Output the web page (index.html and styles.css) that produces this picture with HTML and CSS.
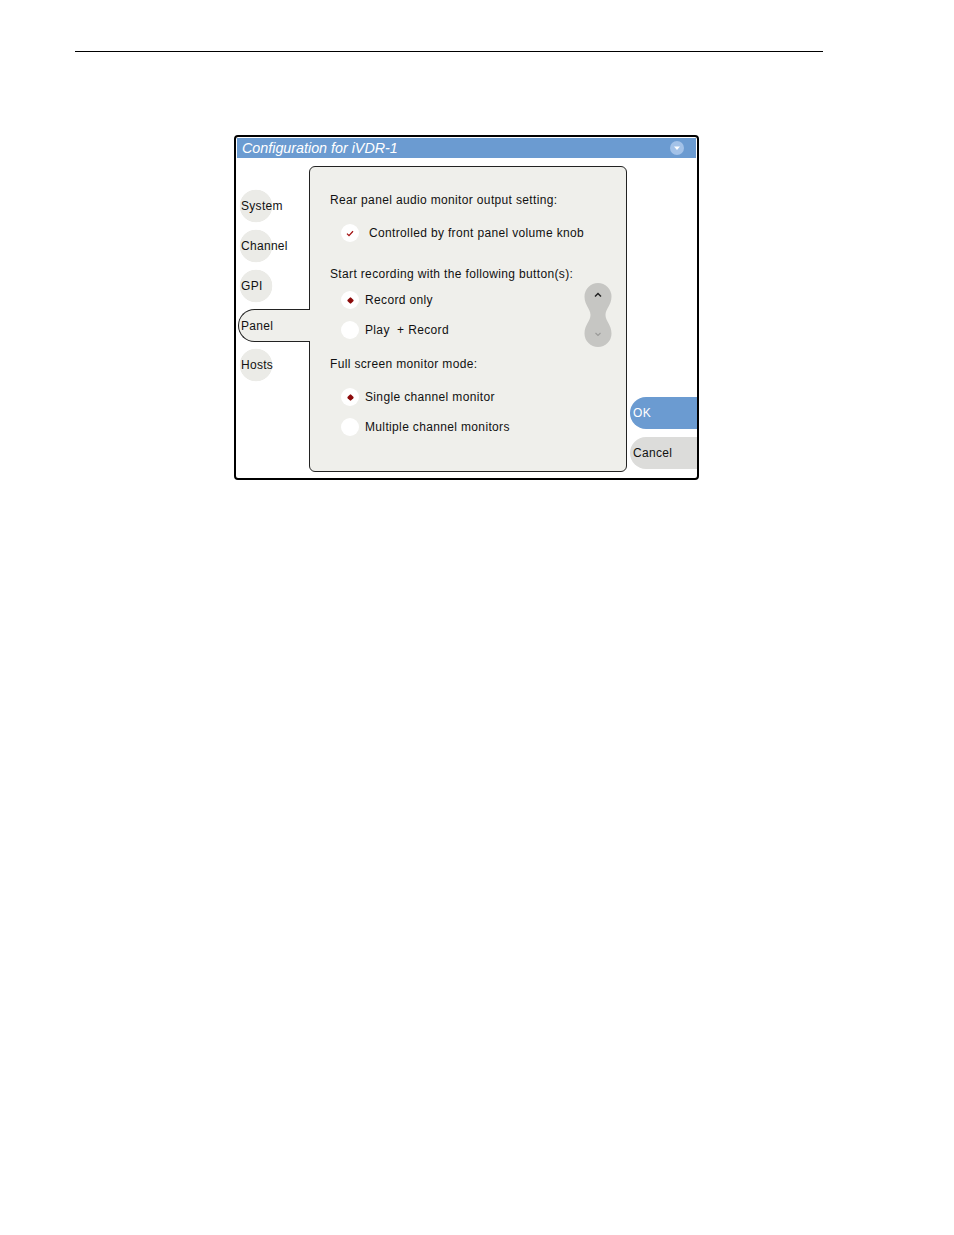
FILE: index.html
```html
<!DOCTYPE html>
<html>
<head>
<meta charset="utf-8">
<link rel="stylesheet" href="styles.css">
</head>
<body>
<div class="page">
  <div class="rule"></div>
  <div class="window">
    <div class="titlebar">
      <span class="title">Configuration for iVDR-1</span>
      <span class="menu-btn">
        <svg width="14" height="14" viewBox="0 0 14 14"><circle cx="7" cy="7" r="7" fill="#a3c2e8"/><polygon points="4,5.5 10,5.5 7,9" fill="#fff"/></svg>
      </span>
    </div>
    <div class="win-body">
      <nav class="tabs">
        <div class="tab">System</div>
        <div class="tab">Channel</div>
        <div class="tab">GPI</div>
        <div class="tab tab-active">Panel</div>
        <div class="tab">Hosts</div>
      </nav>
      <section class="panel">
        <div class="heading h1">Rear panel audio monitor output setting:</div>
        <div class="option check-row opt1">
          <span class="radio"><svg width="8" height="7" viewBox="0 0 8 7"><polyline points="1,3.6 3,5.6 7,1.2" fill="none" stroke="#a31212" stroke-width="1.3"/></svg></span>
          <span>Controlled by front panel volume knob</span>
        </div>
        <div class="heading h2">Start recording with the following button(s):</div>
        <div class="group">
          <div class="group-options">
            <div class="option"><span class="radio"><span class="dot"></span></span><span>Record only</span></div>
            <div class="option opt-next"><span class="radio"></span><span>Play&nbsp; + Record</span></div>
          </div>
          <svg class="scroller" width="28" height="64" viewBox="0 0 28 64">
            <path d="M0.5 13.5 A13.5 13.5 0 0 1 27.5 13.5 C27.5 22 21.5 26 21.5 32 C21.5 38 27.5 42 27.5 50.5 A13.5 13.5 0 0 1 0.5 50.5 C0.5 42 6.5 38 6.5 32 C6.5 26 0.5 22 0.5 13.5 Z" fill="#c6c6c3"/>
            <polyline points="11,13.5 14,10.5 17,13.5" fill="none" stroke="#222" stroke-width="1.5"/>
            <polyline points="11.5,50 14,52.5 16.5,50" fill="none" stroke="#9a9a98" stroke-width="1.1"/>
          </svg>
        </div>
        <div class="heading h3">Full screen monitor mode:</div>
        <div class="option opt4"><span class="radio"><span class="dot"></span></span><span>Single channel monitor</span></div>
        <div class="option opt-next"><span class="radio"></span><span>Multiple channel monitors</span></div>
      </section>
      <div class="actions">
        <div class="btn btn-ok">OK</div>
        <div class="btn btn-cancel">Cancel</div>
      </div>
    </div>
  </div>
</div>
</body>
</html>
```

FILE: styles.css
```css
body {
  margin: 0;
  background: #fff;
  font-family: "Liberation Sans", Arial, sans-serif;
  color: #111;
}

.page {
  padding-top: 51px;
}

.rule {
  margin-left: 75px;
  width: 748px;
  border-top: 1px solid #000;
}

.window {
  margin-left: 234px;
  margin-top: 83px;
  width: 465px;
  height: 345px;
  box-sizing: border-box;
  border: 2px solid #000;
  border-radius: 4px;
  overflow: hidden;
  display: flex;
  flex-direction: column;
  background: #fff;
}

.titlebar {
  margin: 1px 1px 0 1px;
  height: 20px;
  background: #6b9bd1;
  display: flex;
  align-items: center;
  justify-content: space-between;
  padding: 0 12px 0 5px;
}

.title {
  color: #fff;
  font-style: italic;
  font-size: 14.3px;
  line-height: 20px;
}

.menu-btn {
  display: flex;
  width: 14px;
  height: 14px;
}

.win-body {
  flex: 1;
  display: flex;
  padding: 8px 0 6px 0;
  min-height: 0;
}

.tabs {
  width: 73px;
  flex-shrink: 0;
  padding-top: 20px;
  display: flex;
  flex-direction: column;
  font-size: 12px;
  letter-spacing: 0.3px;
}

.tab {
  height: 40px;
  display: flex;
  align-items: center;
  padding-left: 5px;
  background: radial-gradient(circle 16.5px at 20px 50%, #ebebe7 16px, rgba(235,235,231,0) 16.6px);
}

.tab-active {
  position: relative;
  z-index: 1;
  height: 33px;
  box-sizing: border-box;
  margin: 3px -1px 3px 2px;
  padding-left: 2px;
  background: #efefeb;
  border: 1px solid #222;
  border-right: 0;
  border-radius: 17px 0 0 17px;
}

.panel {
  width: 318px;
  flex-shrink: 0;
  box-sizing: border-box;
  border: 1px solid #222;
  border-radius: 6px;
  background: #efefeb;
  padding: 23px 14px 0 20px;
  font-size: 12px;
  letter-spacing: 0.35px;
}

.heading {
  height: 20px;
  line-height: 20px;
  white-space: nowrap;
}

.h2 { margin-top: 21px; }
.h3 { margin-top: 7px; }

.option {
  height: 20px;
  display: flex;
  align-items: center;
  gap: 6px;
  padding-left: 11px;
  white-space: nowrap;
}

.check-row { gap: 10px; }
.opt1 { margin-top: 13px; }
.opt4 { margin-top: 13px; }
.opt-next { margin-top: 10px; }

.radio {
  width: 18px;
  height: 18px;
  border-radius: 50%;
  background: #fff;
  display: flex;
  align-items: center;
  justify-content: center;
  flex-shrink: 0;
}

.dot {
  width: 5px;
  height: 5px;
  background: #8c0b0b;
  border-radius: 1px;
  transform: rotate(45deg);
}

.group {
  margin-top: -1px;
  display: flex;
  align-items: center;
  justify-content: space-between;
}

.scroller {
  display: block;
}

.actions {
  flex: 1;
  display: flex;
  flex-direction: column;
  justify-content: flex-end;
  gap: 8px;
  padding-bottom: 3px;
  font-size: 12px;
  letter-spacing: 0.3px;
}

.btn {
  height: 32px;
  margin-left: 3px;
  border-radius: 16px 0 0 16px;
  display: flex;
  align-items: center;
  padding-left: 3px;
}

.btn-ok {
  background: #6b9bd1;
  color: #fff;
}

.btn-cancel {
  background: #dcdcda;
  color: #111;
}
```
